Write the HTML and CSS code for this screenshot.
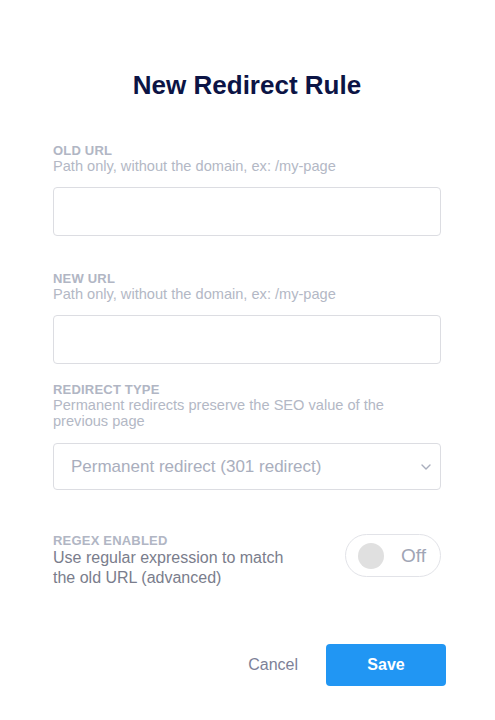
FILE: index.html
```html
<!DOCTYPE html>
<html>
<head>
<meta charset="utf-8">
<link rel="stylesheet" href="styles.css">
</head>
<body>
<div class="modal">
  <h1 class="title">New Redirect Rule</h1>
  <div class="field field-old">
    <div class="label">OLD URL</div>
    <div class="hint">Path only, without the domain, ex: /my-page</div>
    <div class="input"></div>
  </div>
  <div class="field field-new">
    <div class="label">NEW URL</div>
    <div class="hint">Path only, without the domain, ex: /my-page</div>
    <div class="input"></div>
  </div>
  <div class="field field-type">
    <div class="label">REDIRECT TYPE</div>
    <div class="hint">Permanent redirects preserve the SEO value of the previous page</div>
    <div class="select">
      <span class="select-text">Permanent redirect (301 redirect)</span>
      <svg class="chevron" width="10" height="6" viewBox="0 0 10 6"><path d="M1 1l4 4 4-4" fill="none" stroke="#a9aebd" stroke-width="1.4" stroke-linecap="round" stroke-linejoin="round"/></svg>
    </div>
  </div>
  <div class="regex-row">
    <div class="regex-text">
      <div class="label label-regex">REGEX ENABLED</div>
      <div class="desc">Use regular expression to match the old URL (advanced)</div>
    </div>
    <div class="toggle">
      <span class="knob"></span>
      <span class="toggle-text">Off</span>
    </div>
  </div>
  <div class="footer">
    <button class="btn-cancel">Cancel</button>
    <button class="btn-save">Save</button>
  </div>
</div>
</body>
</html>
```
FILE: styles.css
```css
* { box-sizing: border-box; }
html, body { margin: 0; padding: 0; background: #fff; }
body { font-family: "Liberation Sans", Arial, sans-serif; }
.modal { width: 495px; padding: 69px 54px 0 53px; }
.title {
  margin: 0;
  font-size: 26px;
  line-height: 32px;
  font-weight: 700;
  color: #0c1445;
  text-align: center;
}
.field-old { margin-top: 42px; }
.field-new { margin-top: 35px; }
.field-type { margin-top: 18px; }
.label {
  font-size: 13px;
  line-height: 15px;
  font-weight: 700;
  color: #b1b6c4;
  letter-spacing: 0.2px;
}
.hint {
  font-size: 14.6px;
  line-height: 16px;
  color: #b3b8c5;
  padding-right: 40px;
}
.input {
  margin-top: 13px;
  height: 49px;
  border: 1px solid #dcdde2;
  border-radius: 4px;
}
.select {
  margin-top: 14px;
  height: 47px;
  border: 1px solid #dcdde2;
  border-radius: 4px;
  display: flex;
  align-items: center;
  justify-content: space-between;
  padding: 0 9px 0 17px;
}
.select-text { font-size: 17px; color: #a9aebd; }
.chevron { display: block; }
.regex-row {
  margin-top: 44px;
  display: flex;
  justify-content: space-between;
  align-items: flex-start;
}
.regex-text { width: 245px; }
.label-regex { line-height: 14px; }
.desc {
  margin-top: 0;
  font-size: 16px;
  line-height: 20px;
  color: #7a7d8c;
}
.toggle {
  width: 96px;
  height: 43px;
  border: 1px solid #e2e3e8;
  border-radius: 22px;
  display: flex;
  align-items: center;
  padding-left: 12px;
}
.knob {
  width: 26px;
  height: 26px;
  border-radius: 50%;
  background: #e0e0e0;
}
.toggle-text {
  margin-left: 17px;
  font-size: 19px;
  color: #a0a5b5;
}
.footer {
  margin-top: 56px;
  margin-right: -5px;
  display: flex;
  justify-content: flex-end;
  align-items: center;
}
.btn-cancel {
  background: none;
  border: none;
  padding: 0;
  margin-right: 28px;
  font-family: inherit;
  font-size: 16px;
  color: #7d8197;
}
.btn-save {
  width: 120px;
  height: 42px;
  border: none;
  border-radius: 4px;
  background: #2196f3;
  color: #fff;
  font-family: inherit;
  font-size: 16px;
  font-weight: 700;
}
```
